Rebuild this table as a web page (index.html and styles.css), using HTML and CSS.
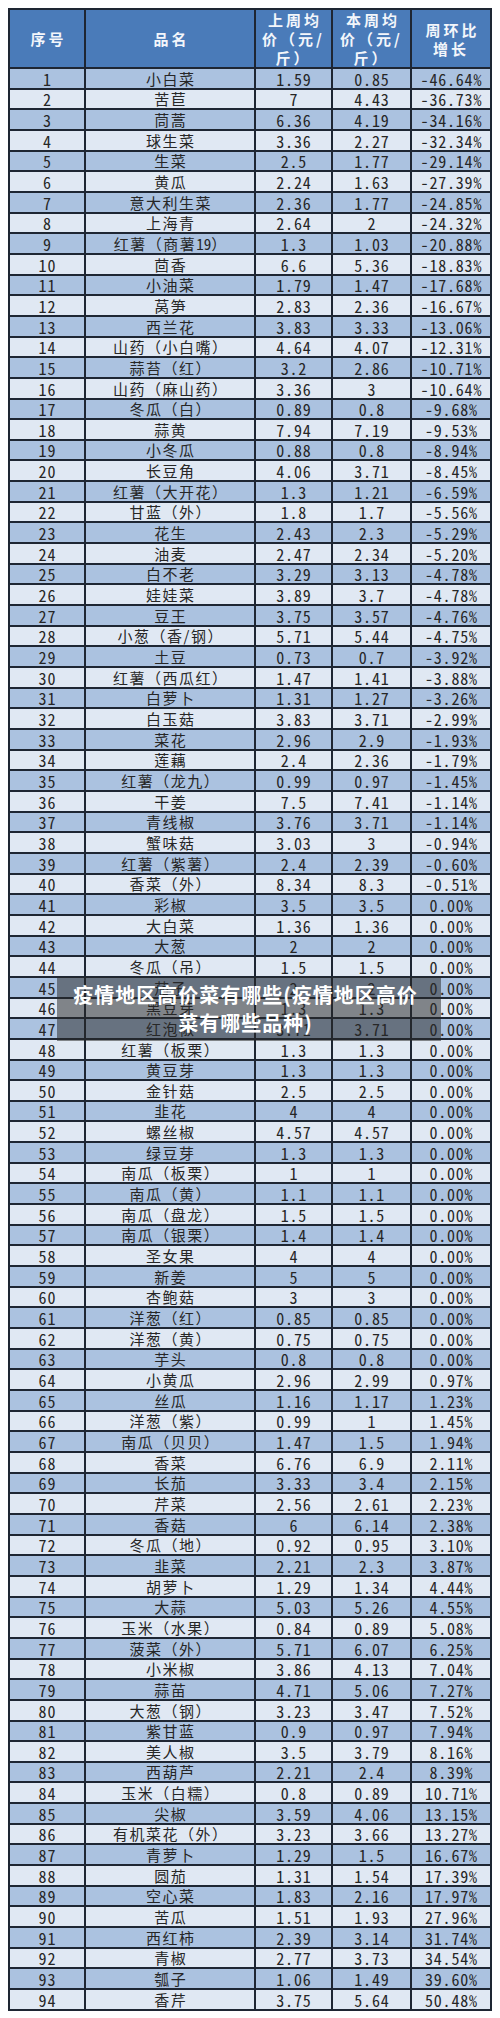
FILE: index.html
```html
<!DOCTYPE html>
<html lang="zh-CN">
<head>
<meta charset="utf-8">
<title>疫情地区高价菜有哪些</title>
<link rel="stylesheet" href="styles.css">
</head>
<body>
<div class="wrap">
<table class="price">
<colgroup><col class="c1"><col class="c2"><col class="c3"><col class="c4"><col class="c5"></colgroup>
<thead>
<tr><th>序号</th><th>品名</th><th>上周均<br>价（元/<br>斤）</th><th>本周均<br>价（元/<br>斤）</th><th>周环比<br>增长</th></tr>
</thead>
<tbody>
<tr><td class="n">1</td><td>小白菜</td><td class="n">1.59</td><td class="n">0.85</td><td class="n">-46.64%</td></tr>
<tr><td class="n">2</td><td>苦苣</td><td class="n">7</td><td class="n">4.43</td><td class="n">-36.73%</td></tr>
<tr><td class="n">3</td><td>茼蒿</td><td class="n">6.36</td><td class="n">4.19</td><td class="n">-34.16%</td></tr>
<tr><td class="n">4</td><td>球生菜</td><td class="n">3.36</td><td class="n">2.27</td><td class="n">-32.34%</td></tr>
<tr><td class="n">5</td><td>生菜</td><td class="n">2.5</td><td class="n">1.77</td><td class="n">-29.14%</td></tr>
<tr><td class="n">6</td><td>黄瓜</td><td class="n">2.24</td><td class="n">1.63</td><td class="n">-27.39%</td></tr>
<tr><td class="n">7</td><td>意大利生菜</td><td class="n">2.36</td><td class="n">1.77</td><td class="n">-24.85%</td></tr>
<tr><td class="n">8</td><td>上海青</td><td class="n">2.64</td><td class="n">2</td><td class="n">-24.32%</td></tr>
<tr><td class="n">9</td><td>红薯（商薯<span class="d">19</span>）</td><td class="n">1.3</td><td class="n">1.03</td><td class="n">-20.88%</td></tr>
<tr><td class="n">10</td><td>茴香</td><td class="n">6.6</td><td class="n">5.36</td><td class="n">-18.83%</td></tr>
<tr><td class="n">11</td><td>小油菜</td><td class="n">1.79</td><td class="n">1.47</td><td class="n">-17.68%</td></tr>
<tr><td class="n">12</td><td>莴笋</td><td class="n">2.83</td><td class="n">2.36</td><td class="n">-16.67%</td></tr>
<tr><td class="n">13</td><td>西兰花</td><td class="n">3.83</td><td class="n">3.33</td><td class="n">-13.06%</td></tr>
<tr><td class="n">14</td><td>山药（小白嘴）</td><td class="n">4.64</td><td class="n">4.07</td><td class="n">-12.31%</td></tr>
<tr><td class="n">15</td><td>蒜苔（红）</td><td class="n">3.2</td><td class="n">2.86</td><td class="n">-10.71%</td></tr>
<tr><td class="n">16</td><td>山药（麻山药）</td><td class="n">3.36</td><td class="n">3</td><td class="n">-10.64%</td></tr>
<tr><td class="n">17</td><td>冬瓜（白）</td><td class="n">0.89</td><td class="n">0.8</td><td class="n">-9.68%</td></tr>
<tr><td class="n">18</td><td>蒜黄</td><td class="n">7.94</td><td class="n">7.19</td><td class="n">-9.53%</td></tr>
<tr><td class="n">19</td><td>小冬瓜</td><td class="n">0.88</td><td class="n">0.8</td><td class="n">-8.94%</td></tr>
<tr><td class="n">20</td><td>长豆角</td><td class="n">4.06</td><td class="n">3.71</td><td class="n">-8.45%</td></tr>
<tr><td class="n">21</td><td>红薯（大开花）</td><td class="n">1.3</td><td class="n">1.21</td><td class="n">-6.59%</td></tr>
<tr><td class="n">22</td><td>甘蓝（外）</td><td class="n">1.8</td><td class="n">1.7</td><td class="n">-5.56%</td></tr>
<tr><td class="n">23</td><td>花生</td><td class="n">2.43</td><td class="n">2.3</td><td class="n">-5.29%</td></tr>
<tr><td class="n">24</td><td>油麦</td><td class="n">2.47</td><td class="n">2.34</td><td class="n">-5.20%</td></tr>
<tr><td class="n">25</td><td>白不老</td><td class="n">3.29</td><td class="n">3.13</td><td class="n">-4.78%</td></tr>
<tr><td class="n">26</td><td>娃娃菜</td><td class="n">3.89</td><td class="n">3.7</td><td class="n">-4.78%</td></tr>
<tr><td class="n">27</td><td>豆王</td><td class="n">3.75</td><td class="n">3.57</td><td class="n">-4.76%</td></tr>
<tr><td class="n">28</td><td>小葱（香/钢）</td><td class="n">5.71</td><td class="n">5.44</td><td class="n">-4.75%</td></tr>
<tr><td class="n">29</td><td>土豆</td><td class="n">0.73</td><td class="n">0.7</td><td class="n">-3.92%</td></tr>
<tr><td class="n">30</td><td>红薯（西瓜红）</td><td class="n">1.47</td><td class="n">1.41</td><td class="n">-3.88%</td></tr>
<tr><td class="n">31</td><td>白萝卜</td><td class="n">1.31</td><td class="n">1.27</td><td class="n">-3.26%</td></tr>
<tr><td class="n">32</td><td>白玉菇</td><td class="n">3.83</td><td class="n">3.71</td><td class="n">-2.99%</td></tr>
<tr><td class="n">33</td><td>菜花</td><td class="n">2.96</td><td class="n">2.9</td><td class="n">-1.93%</td></tr>
<tr><td class="n">34</td><td>莲藕</td><td class="n">2.4</td><td class="n">2.36</td><td class="n">-1.79%</td></tr>
<tr><td class="n">35</td><td>红薯（龙九）</td><td class="n">0.99</td><td class="n">0.97</td><td class="n">-1.45%</td></tr>
<tr><td class="n">36</td><td>干姜</td><td class="n">7.5</td><td class="n">7.41</td><td class="n">-1.14%</td></tr>
<tr><td class="n">37</td><td>青线椒</td><td class="n">3.76</td><td class="n">3.71</td><td class="n">-1.14%</td></tr>
<tr><td class="n">38</td><td>蟹味菇</td><td class="n">3.03</td><td class="n">3</td><td class="n">-0.94%</td></tr>
<tr><td class="n">39</td><td>红薯（紫薯）</td><td class="n">2.4</td><td class="n">2.39</td><td class="n">-0.60%</td></tr>
<tr><td class="n">40</td><td>香菜（外）</td><td class="n">8.34</td><td class="n">8.3</td><td class="n">-0.51%</td></tr>
<tr><td class="n">41</td><td>彩椒</td><td class="n">3.5</td><td class="n">3.5</td><td class="n">0.00%</td></tr>
<tr><td class="n">42</td><td>大白菜</td><td class="n">1.36</td><td class="n">1.36</td><td class="n">0.00%</td></tr>
<tr><td class="n">43</td><td>大葱</td><td class="n">2</td><td class="n">2</td><td class="n">0.00%</td></tr>
<tr><td class="n">44</td><td>冬瓜（吊）</td><td class="n">1.5</td><td class="n">1.5</td><td class="n">0.00%</td></tr>
<tr><td class="n">45</td><td>茄子</td><td class="n">2</td><td class="n">2</td><td class="n">0.00%</td></tr>
<tr><td class="n">46</td><td>黑豆芽</td><td class="n">1.3</td><td class="n">1.3</td><td class="n">0.00%</td></tr>
<tr><td class="n">47</td><td>红泡椒</td><td class="n">3.71</td><td class="n">3.71</td><td class="n">0.00%</td></tr>
<tr><td class="n">48</td><td>红薯（板栗）</td><td class="n">1.3</td><td class="n">1.3</td><td class="n">0.00%</td></tr>
<tr><td class="n">49</td><td>黄豆芽</td><td class="n">1.3</td><td class="n">1.3</td><td class="n">0.00%</td></tr>
<tr><td class="n">50</td><td>金针菇</td><td class="n">2.5</td><td class="n">2.5</td><td class="n">0.00%</td></tr>
<tr><td class="n">51</td><td>韭花</td><td class="n">4</td><td class="n">4</td><td class="n">0.00%</td></tr>
<tr><td class="n">52</td><td>螺丝椒</td><td class="n">4.57</td><td class="n">4.57</td><td class="n">0.00%</td></tr>
<tr><td class="n">53</td><td>绿豆芽</td><td class="n">1.3</td><td class="n">1.3</td><td class="n">0.00%</td></tr>
<tr><td class="n">54</td><td>南瓜（板栗）</td><td class="n">1</td><td class="n">1</td><td class="n">0.00%</td></tr>
<tr><td class="n">55</td><td>南瓜（黄）</td><td class="n">1.1</td><td class="n">1.1</td><td class="n">0.00%</td></tr>
<tr><td class="n">56</td><td>南瓜（盘龙）</td><td class="n">1.5</td><td class="n">1.5</td><td class="n">0.00%</td></tr>
<tr><td class="n">57</td><td>南瓜（银栗）</td><td class="n">1.4</td><td class="n">1.4</td><td class="n">0.00%</td></tr>
<tr><td class="n">58</td><td>圣女果</td><td class="n">4</td><td class="n">4</td><td class="n">0.00%</td></tr>
<tr><td class="n">59</td><td>新姜</td><td class="n">5</td><td class="n">5</td><td class="n">0.00%</td></tr>
<tr><td class="n">60</td><td>杏鲍菇</td><td class="n">3</td><td class="n">3</td><td class="n">0.00%</td></tr>
<tr><td class="n">61</td><td>洋葱（红）</td><td class="n">0.85</td><td class="n">0.85</td><td class="n">0.00%</td></tr>
<tr><td class="n">62</td><td>洋葱（黄）</td><td class="n">0.75</td><td class="n">0.75</td><td class="n">0.00%</td></tr>
<tr><td class="n">63</td><td>芋头</td><td class="n">0.8</td><td class="n">0.8</td><td class="n">0.00%</td></tr>
<tr><td class="n">64</td><td>小黄瓜</td><td class="n">2.96</td><td class="n">2.99</td><td class="n">0.97%</td></tr>
<tr><td class="n">65</td><td>丝瓜</td><td class="n">1.16</td><td class="n">1.17</td><td class="n">1.23%</td></tr>
<tr><td class="n">66</td><td>洋葱（紫）</td><td class="n">0.99</td><td class="n">1</td><td class="n">1.45%</td></tr>
<tr><td class="n">67</td><td>南瓜（贝贝）</td><td class="n">1.47</td><td class="n">1.5</td><td class="n">1.94%</td></tr>
<tr><td class="n">68</td><td>香菜</td><td class="n">6.76</td><td class="n">6.9</td><td class="n">2.11%</td></tr>
<tr><td class="n">69</td><td>长茄</td><td class="n">3.33</td><td class="n">3.4</td><td class="n">2.15%</td></tr>
<tr><td class="n">70</td><td>芹菜</td><td class="n">2.56</td><td class="n">2.61</td><td class="n">2.23%</td></tr>
<tr><td class="n">71</td><td>香菇</td><td class="n">6</td><td class="n">6.14</td><td class="n">2.38%</td></tr>
<tr><td class="n">72</td><td>冬瓜（地）</td><td class="n">0.92</td><td class="n">0.95</td><td class="n">3.10%</td></tr>
<tr><td class="n">73</td><td>韭菜</td><td class="n">2.21</td><td class="n">2.3</td><td class="n">3.87%</td></tr>
<tr><td class="n">74</td><td>胡萝卜</td><td class="n">1.29</td><td class="n">1.34</td><td class="n">4.44%</td></tr>
<tr><td class="n">75</td><td>大蒜</td><td class="n">5.03</td><td class="n">5.26</td><td class="n">4.55%</td></tr>
<tr><td class="n">76</td><td>玉米（水果）</td><td class="n">0.84</td><td class="n">0.89</td><td class="n">5.08%</td></tr>
<tr><td class="n">77</td><td>菠菜（外）</td><td class="n">5.71</td><td class="n">6.07</td><td class="n">6.25%</td></tr>
<tr><td class="n">78</td><td>小米椒</td><td class="n">3.86</td><td class="n">4.13</td><td class="n">7.04%</td></tr>
<tr><td class="n">79</td><td>蒜苗</td><td class="n">4.71</td><td class="n">5.06</td><td class="n">7.27%</td></tr>
<tr><td class="n">80</td><td>大葱（钢）</td><td class="n">3.23</td><td class="n">3.47</td><td class="n">7.52%</td></tr>
<tr><td class="n">81</td><td>紫甘蓝</td><td class="n">0.9</td><td class="n">0.97</td><td class="n">7.94%</td></tr>
<tr><td class="n">82</td><td>美人椒</td><td class="n">3.5</td><td class="n">3.79</td><td class="n">8.16%</td></tr>
<tr><td class="n">83</td><td>西葫芦</td><td class="n">2.21</td><td class="n">2.4</td><td class="n">8.39%</td></tr>
<tr><td class="n">84</td><td>玉米（白糯）</td><td class="n">0.8</td><td class="n">0.89</td><td class="n">10.71%</td></tr>
<tr><td class="n">85</td><td>尖椒</td><td class="n">3.59</td><td class="n">4.06</td><td class="n">13.15%</td></tr>
<tr><td class="n">86</td><td>有机菜花（外）</td><td class="n">3.23</td><td class="n">3.66</td><td class="n">13.27%</td></tr>
<tr><td class="n">87</td><td>青萝卜</td><td class="n">1.29</td><td class="n">1.5</td><td class="n">16.67%</td></tr>
<tr><td class="n">88</td><td>圆茄</td><td class="n">1.31</td><td class="n">1.54</td><td class="n">17.39%</td></tr>
<tr><td class="n">89</td><td>空心菜</td><td class="n">1.83</td><td class="n">2.16</td><td class="n">17.97%</td></tr>
<tr><td class="n">90</td><td>苦瓜</td><td class="n">1.51</td><td class="n">1.93</td><td class="n">27.96%</td></tr>
<tr><td class="n">91</td><td>西红柿</td><td class="n">2.39</td><td class="n">3.14</td><td class="n">31.74%</td></tr>
<tr><td class="n">92</td><td>青椒</td><td class="n">2.77</td><td class="n">3.73</td><td class="n">34.54%</td></tr>
<tr><td class="n">93</td><td>瓠子</td><td class="n">1.06</td><td class="n">1.49</td><td class="n">39.60%</td></tr>
<tr><td class="n">94</td><td>香芹</td><td class="n">3.75</td><td class="n">5.64</td><td class="n">50.48%</td></tr>
</tbody>
</table>
<div class="caption">疫情地区高价菜有哪些(疫情地区高价<br>菜有哪些品种)</div>
</div>
</body>
</html>
```

FILE: styles.css
```css
html, body {
  margin: 0;
  padding: 0;
  background: #ffffff;
}
body {
  padding: 8px;
  font-family: "Noto Sans CJK SC", "Noto Sans", sans-serif;
  color: #262626;
}
.wrap {
  position: relative;
  width: 484px;
}
.price {
  table-layout: fixed;
  width: 484px;
  border-collapse: separate;
  border-spacing: 0;
  border-top: 2px solid #1e2633;
  border-left: 2px solid #1e2633;
}
.c1 { width: 76px; }
.c2 { width: 170px; }
.c3 { width: 77px; }
.c4 { width: 79px; }
.c5 { width: 80px; }
.price th,
.price td {
  border-right: 2px solid #1e2633;
  border-bottom: 2px solid #1e2633;
  padding: 0;
  text-align: center;
  white-space: nowrap;
}
.price thead tr {
  height: 59px;
}
.price th {
  background: #4a7bb9;
  color: #f3f6fb;
  font-size: 15px;
  font-weight: 700;
  line-height: 19px;
  letter-spacing: 3px;
  text-indent: 3px;
  vertical-align: middle;
}
.price tbody tr {
  height: 20.66px;
}
.price td {
  font-size: 15px;
  line-height: 18px;
  letter-spacing: 1.5px;
  text-indent: 1.5px;
  vertical-align: bottom;
}
.price td.n,
.price td .d {
  font-size: 16px;
  font-feature-settings: "hwid" 1;
  letter-spacing: 0.8px;
}
.price td.n {
  text-indent: 0.8px;
}
.price td .d {
  font-size: 15px;
  letter-spacing: 0;
}
.price tbody tr:nth-child(odd) td {
  background: #abc2e0;
}
.price tbody tr:nth-child(even) td {
  background: #e0e8f3;
}
.caption {
  position: absolute;
  left: 49px;
  top: 969px;
  width: 384px;
  height: 64px;
  box-sizing: border-box;
  padding-top: 4px;
  padding-right: 7px;
  background: rgba(40, 40, 40, 0.52);
  color: #ffffff;
  font-size: 20px;
  font-weight: 700;
  line-height: 28px;
  letter-spacing: 1px;
  text-align: center;
  white-space: nowrap;
}
```
